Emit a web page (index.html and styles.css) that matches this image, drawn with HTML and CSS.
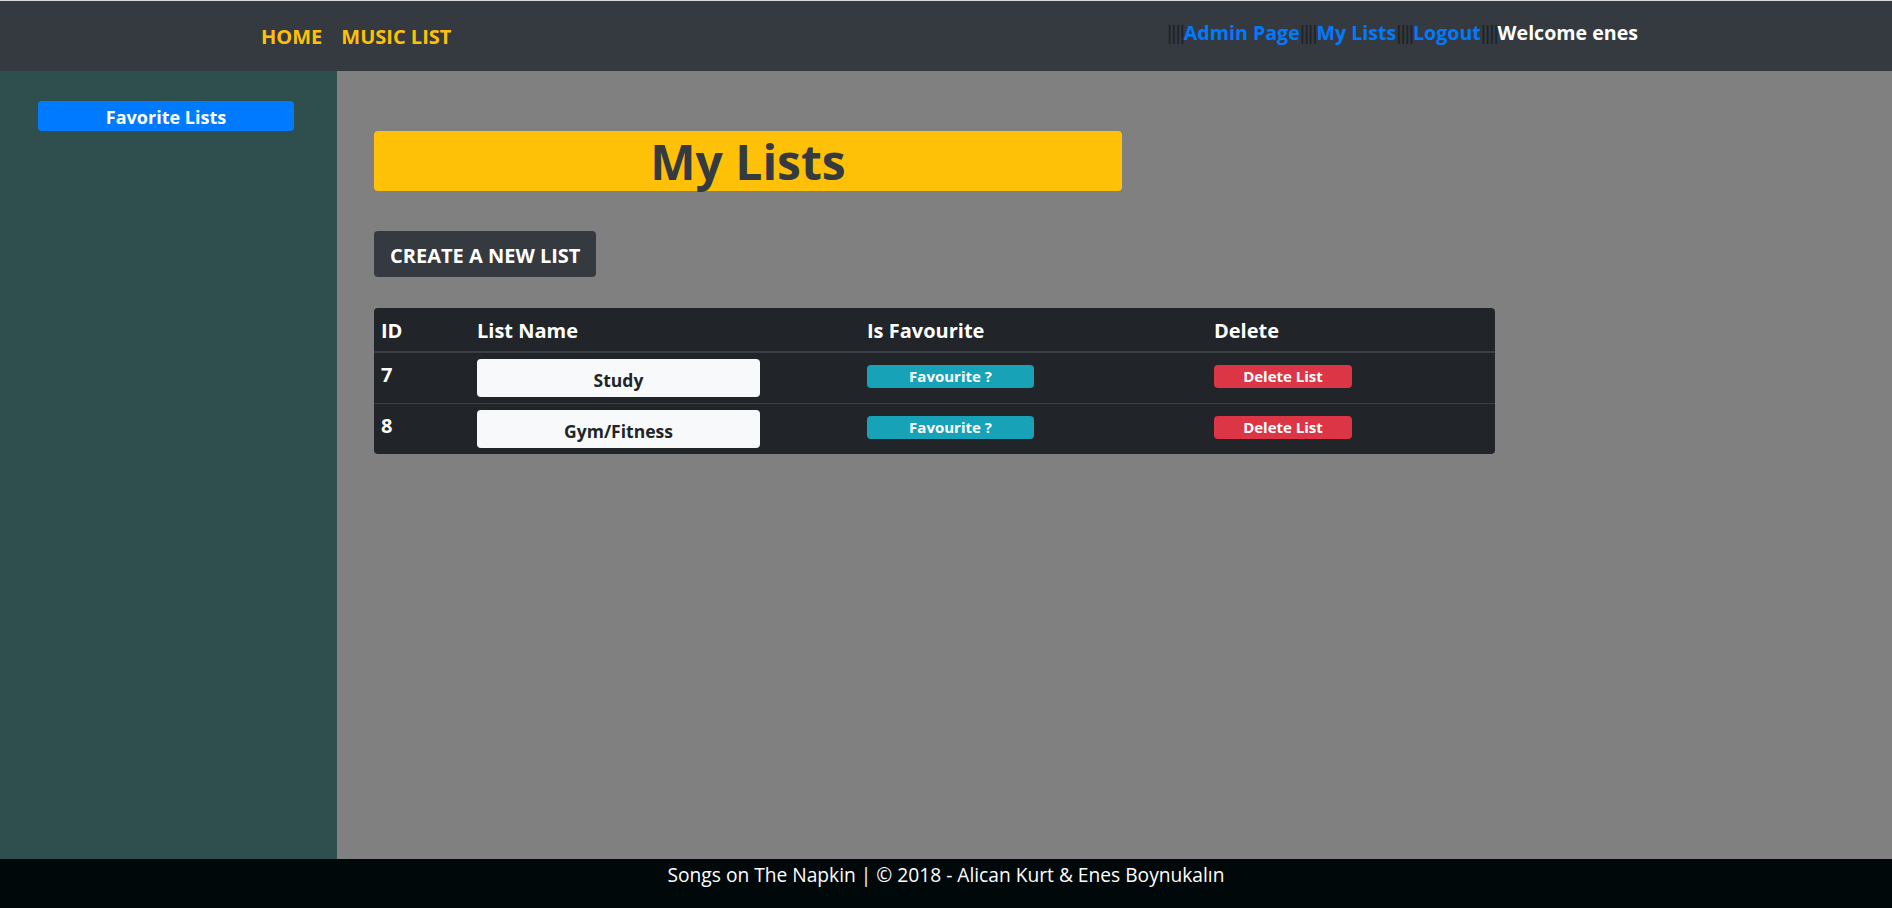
FILE: index.html
```html
<!DOCTYPE html>
<html lang="en">
<head>
<meta charset="utf-8">
<title>My Lists - Songs on The Napkin</title>
<link rel="stylesheet" href="styles.css">
</head>
<body>
<div class="page">
  <header class="topbar">
    <nav class="nav-left">
      <a class="nav-link" href="#">HOME</a>
      <a class="nav-link" href="#">MUSIC LIST</a>
    </nav>
    <div class="nav-right"><span class="sep">||||</span><a class="user-link" href="#">Admin Page</a><span class="sep">||||</span><a class="user-link" href="#">My Lists</a><span class="sep">||||</span><a class="user-link" href="#">Logout</a><span class="sep">||||</span><span class="welcome">Welcome enes</span></div>
  </header>

  <div class="main-area">
    <aside class="sidebar">
      <a class="fav-lists" href="#">Favorite Lists</a>
    </aside>

    <main class="content">
      <h1 class="title">My Lists</h1>
      <button class="create-btn" type="button">Create a new list</button>

      <div class="table-wrap">
        <table class="lists">
          <colgroup>
            <col class="col-id">
            <col class="col-name">
            <col class="col-fav">
            <col class="col-del">
          </colgroup>
          <thead>
            <tr>
              <th>ID</th>
              <th>List Name</th>
              <th>Is Favourite</th>
              <th>Delete</th>
            </tr>
          </thead>
          <tbody>
            <tr>
              <td>7</td>
              <td><a class="name-btn" href="#">Study</a></td>
              <td><a class="small-btn fav" href="#">Favourite ?</a></td>
              <td><a class="small-btn del" href="#">Delete List</a></td>
            </tr>
            <tr>
              <td>8</td>
              <td><a class="name-btn" href="#">Gym/Fitness</a></td>
              <td><a class="small-btn fav" href="#">Favourite ?</a></td>
              <td><a class="small-btn del" href="#">Delete List</a></td>
            </tr>
          </tbody>
        </table>
      </div>
    </main>
  </div>

  <footer class="footer">Songs on The Napkin | © 2018 - Alican Kurt &amp; Enes Boynukalın</footer>
</div>
</body>
</html>
```

FILE: styles.css
```css
* {
  box-sizing: border-box;
}

html,
body {
  margin: 0;
  padding: 0;
}

body {
  font-family: "Open Sans", "Noto Sans", sans-serif;
  background: #808080;
}

.page {
  display: flex;
  flex-direction: column;
  height: 908px;
}

/* ---------- top bar ---------- */
.topbar {
  flex: none;
  height: 71px;
  border-top: 1px solid #d9d9d9;
  background: #343a40;
  display: flex;
  justify-content: space-between;
  align-items: flex-start;
  padding: 0 254px 0 261px;
}

.nav-left {
  display: flex;
  gap: 19px;
  margin-top: 21px;
  line-height: 30px;
}

.nav-link {
  color: #ffc107;
  font-size: 20px;
  font-weight: 700;
  text-decoration: none;
}

.nav-right {
  margin-top: 17px;
  line-height: 30px;
  font-size: 19.6px;
  font-weight: 700;
  white-space: nowrap;
}

.sep {
  font-family: "Liberation Sans", sans-serif;
  font-size: 20px;
  font-weight: 400;
  color: #1e2226;
  letter-spacing: -1px;
}

.user-link {
  color: #007bff;
  text-decoration: none;
}

.welcome {
  color: #ffffff;
}

/* ---------- body ---------- */
.main-area {
  flex: 1;
  display: flex;
  min-height: 0;
}

.sidebar {
  flex: none;
  width: 337px;
  background: #2f4f4f;
  padding: 30px 43px 0 38px;
}

.fav-lists {
  display: block;
  height: 30px;
  padding-top: 3px;
  background: #007bff;
  border-radius: 4px;
  color: #ffffff;
  font-size: 18px;
  font-weight: 700;
  line-height: 27px;
  text-align: center;
  text-decoration: none;
}

.content {
  flex: 1;
  padding: 60px 0 0 37px;
}

.title {
  width: 748px;
  height: 60px;
  margin: 0;
  background: #ffc107;
  border-radius: 4px;
  color: #343a40;
  font-size: 48px;
  font-weight: 700;
  line-height: 62px;
  text-align: center;
}

.create-btn {
  display: block;
  margin-top: 40px;
  height: 46px;
  padding: 3px 16px 0;
  background: #343a40;
  border: none;
  border-radius: 4px;
  color: #ffffff;
  font-family: inherit;
  font-size: 20px;
  font-weight: 700;
  line-height: 43px;
  text-transform: uppercase;
}

/* ---------- table ---------- */
.table-wrap {
  margin-top: 31px;
  width: 1121px;
  background: #212529;
  border-radius: 4px;
  overflow: hidden;
}

.lists {
  width: 100%;
  border-collapse: separate;
  border-spacing: 0;
  table-layout: fixed;
  color: #ffffff;
  font-size: 20px;
  font-weight: 700;
}

.col-id { width: 96px; }
.col-name { width: 390px; }
.col-fav { width: 347px; }
.col-del { width: 288px; }

.lists th {
  text-align: left;
  vertical-align: top;
  padding: 8px 7px 5px;
  line-height: 30px;
  border-bottom: 2px solid #3a3f45;
}

.lists td {
  vertical-align: top;
  padding: 6px 7px;
  line-height: 32px;
}

.lists tbody tr + tr td {
  border-top: 1px solid #3a3f45;
}

.name-btn {
  display: block;
  width: 283px;
  height: 38px;
  padding-top: 4px;
  background: #f8f9fa;
  border-radius: 4px;
  color: #212529;
  font-size: 17.5px;
  font-weight: 700;
  line-height: 34px;
  text-align: center;
  text-decoration: none;
}

.small-btn {
  display: block;
  height: 23px;
  margin-top: 6px;
  border-radius: 4px;
  color: #ffffff;
  font-size: 15px;
  font-weight: 700;
  line-height: 23px;
  text-align: center;
  text-decoration: none;
}

.small-btn.fav {
  width: 167px;
  background: #17a2b8;
}

.small-btn.del {
  width: 138px;
  background: #dc3545;
}

/* ---------- footer ---------- */
.footer {
  flex: none;
  height: 49px;
  padding-top: 1px;
  background: #01080a;
  color: #ffffff;
  font-size: 19.2px;
  line-height: 30px;
  text-align: center;
}
```
